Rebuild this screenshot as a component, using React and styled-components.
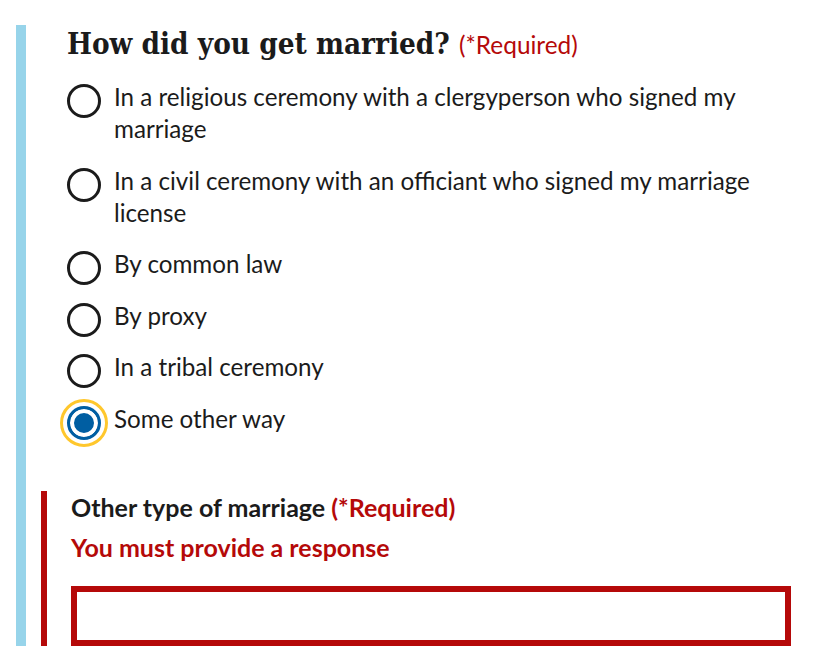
import React, { useState } from "react";
import styled, { createGlobalStyle } from "styled-components";

const GlobalStyle = createGlobalStyle`
  html, body {
    margin: 0;
    padding: 0;
    background: #fff;
  }
  body {
    font-family: Lato, "Noto Sans", sans-serif;
    color: #1b1b1b;
  }
`;

const OPTIONS = [
  "In a religious ceremony with a clergyperson who signed my marriage",
  "In a civil ceremony with an officiant who signed my marriage license",
  "By common law",
  "By proxy",
  "In a tribal ceremony",
  "Some other way",
];

const App = () => {
  const [value, setValue] = useState(OPTIONS.length - 1);

  return (
    <>
      <GlobalStyle />
      <Page>
        <Fieldset>
          <Legend>
            How did you get married? <Required>(*Required)</Required>
          </Legend>
          <Options>
            {OPTIONS.map((label, idx) => (
              <Option key={label} onClick={() => setValue(idx)}>
                <Circle checked={value === idx} />
                <OptionText>{label}</OptionText>
              </Option>
            ))}
          </Options>
          {value === OPTIONS.length - 1 && (
            <ErrorGroup>
              <Label>
                Other type of marriage <LabelRequired>(*Required)</LabelRequired>
              </Label>
              <ErrorMessage>You must provide a response</ErrorMessage>
              <Input type="text" />
            </ErrorGroup>
          )}
        </Fieldset>
      </Page>
    </>
  );
};

const Page = styled.div`
  padding: 25px 0 25px 16px;
`;

const Fieldset = styled.div`
  border-left: 10px solid #97d4ea;
  padding-left: 41px;
  width: 724px;
`;

const Legend = styled.h2`
  margin: 0;
  font-family: "DejaVu Serif Condensed", "DejaVu Serif", serif;
  font-weight: 700;
  font-size: 29.4px;
  line-height: 38px;
  color: #1b1b1b;
`;

const Required = styled.span`
  font-family: Lato, "Noto Sans", sans-serif;
  font-weight: 400;
  font-size: 24.4px;
  color: #b50909;
`;

const Options = styled.div`
  display: flex;
  flex-direction: column;
  gap: 19.5px;
  margin-top: 17px;
`;

const Option = styled.label`
  display: flex;
  align-items: flex-start;
  gap: 13px;
  cursor: pointer;
`;

const Circle = styled.span`
  flex: none;
  width: 34px;
  height: 34px;
  margin: 3px 0 -5px;
  box-sizing: border-box;
  border-radius: 50%;
  border: 3px solid ${(props) => (props.checked ? "#005ea2" : "#1b1b1b")};
  background: ${(props) => (props.checked ? "#005ea2" : "#fff")};
  box-shadow: ${(props) => (props.checked ? "inset 0 0 0 4px #fff" : "none")};
  outline: ${(props) => (props.checked ? "3px solid #ffc72c" : "none")};
  outline-offset: 4px;
`;

const OptionText = styled.span`
  font-size: 24.2px;
  line-height: 32px;
  max-width: 676px;
`;

const ErrorGroup = styled.div`
  margin: 56.5px 0 0 -26px;
  border-left: 6px solid #b50909;
  padding: 0 0 0 24px;
`;

const Label = styled.div`
  font-weight: 700;
  font-size: 25px;
  line-height: 32px;
`;

const LabelRequired = styled.span`
  color: #b50909;
`;

const ErrorMessage = styled.div`
  margin-top: 8px;
  font-weight: 700;
  font-size: 25px;
  line-height: 32px;
  color: #b50909;
`;

const Input = styled.input`
  display: block;
  margin-top: 23px;
  width: 720px;
  height: 60px;
  box-sizing: border-box;
  border: 6px solid #b50909;
  padding: 0 12px;
  font-family: Lato, "Noto Sans", sans-serif;
  font-size: 22px;
  outline: none;
`;

export default App;
